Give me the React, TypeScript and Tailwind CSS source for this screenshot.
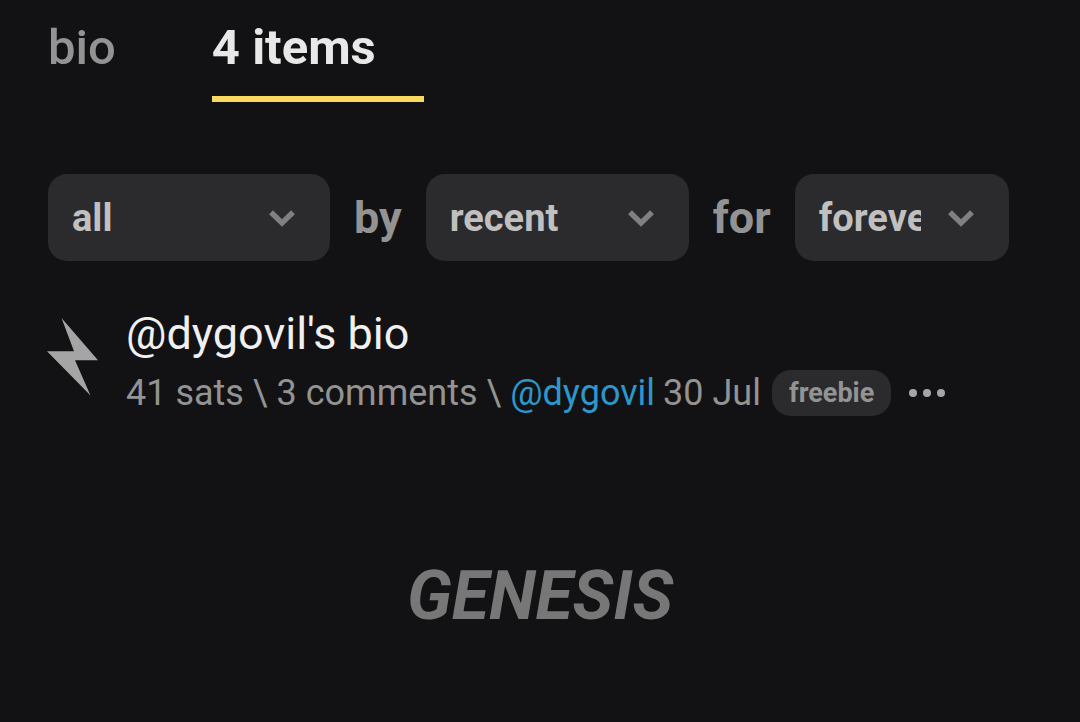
import React from 'react';

interface FilterSelectProps {
  label: string;
  options: string[];
  className: string;
}

const FilterSelect: React.FC<FilterSelectProps> = ({ label, options, className }) => (
  <div className={`relative min-w-0 ${className}`}>
    <select
      aria-label={label}
      defaultValue={options[0]}
      className="block w-full h-[87px] appearance-none rounded-[19px] bg-[#2b2b2d] pt-0.5 pl-6 pr-[88px] text-[38px] font-bold text-[#c0c0c0]"
    >
      {options.map(option => (
        <option key={option} value={option}>{option}</option>
      ))}
    </select>
    <svg viewBox="0 0 26 18" className="pointer-events-none absolute right-[35px] top-[35px] h-[18px] w-[26px]" aria-hidden="true">
      <path d="M2 3.2 L13 14 L24 3.2" fill="none" stroke="#808080" strokeWidth="5.4" />
    </svg>
  </div>
);

const Tabs: React.FC = () => (
  <nav className="flex gap-12 text-[49px] leading-[60px]">
    <a href="#bio" className="pr-12 pb-[18px] font-medium text-[#939393]">bio</a>
    <a href="#items" aria-current="page" className="border-b-6 border-[#fada5e] pr-12 pb-[18px] font-bold text-[#e8e8e8]">
      4 items
    </a>
  </nav>
);

const Item: React.FC = () => (
  <article className="mt-12 -ml-px flex">
    <button type="button" aria-label="zap" className="mt-[9px] h-[78px] w-[51px] shrink-0">
      <svg viewBox="0 0 51 78" className="h-full w-full" aria-hidden="true">
        <path d="M14.5 0 L51 42.2 L28 42.2 L43.5 77.5 L0 33.2 L27 33.2 Z" fill="#a5a5a5" />
      </svg>
    </button>
    <div className="ml-7">
      <a href="#item" className="block text-[45px] leading-[50px] text-[#f0f0f0]">@dygovil's bio</a>
      <div className="mt-[11px] flex flex-wrap items-center text-[36px] leading-[46px] text-[#939393]">
        <span className="whitespace-pre">41 sats \ </span>
        <a href="#comments">3 comments</a>
        <span className="whitespace-pre"> \ </span>
        <a href="#dygovil" className="text-[#2d97cc]">@dygovil</a>
        <time className="ml-2">30 Jul</time>
        <span className="ml-[11px] rounded-[19px] bg-[#2b2b2d] px-[17px] text-[27px] font-bold">freebie</span>
        <button type="button" aria-label="more" className="ml-[18px]">
          <svg viewBox="0 0 36 8" className="h-2 w-9" fill="#a5a5a5" aria-hidden="true">
            <circle cx="4" cy="4" r="4" />
            <circle cx="18" cy="4" r="4" />
            <circle cx="32" cy="4" r="4" />
          </svg>
        </button>
      </div>
    </div>
  </article>
);

const App: React.FC = () => {
  return (
    <div className="min-h-screen bg-[#121214] px-12 pt-[18px] font-['Roboto','Liberation_Sans',sans-serif]">
      <Tabs />

      {/* Sort and range filters */}
      <form className="mt-[72px] flex items-center gap-6 text-[45px] font-bold text-[#939393]">
        <FilterSelect label="type" options={['all', 'posts', 'comments']} className="w-[282px]" />
        by
        <FilterSelect label="sort" options={['recent', 'zaprank', 'sats']} className="w-[263px]" />
        for
        <FilterSelect label="range" options={['forever', 'day', 'week', 'month']} className="w-[214px]" />
      </form>

      <Item />

      {/* End of the list */}
      <div className="mt-[138px] text-center text-[68px] leading-[84px] font-bold text-[#777777] italic">
        GENESIS
      </div>
    </div>
  );
};

export default App;
